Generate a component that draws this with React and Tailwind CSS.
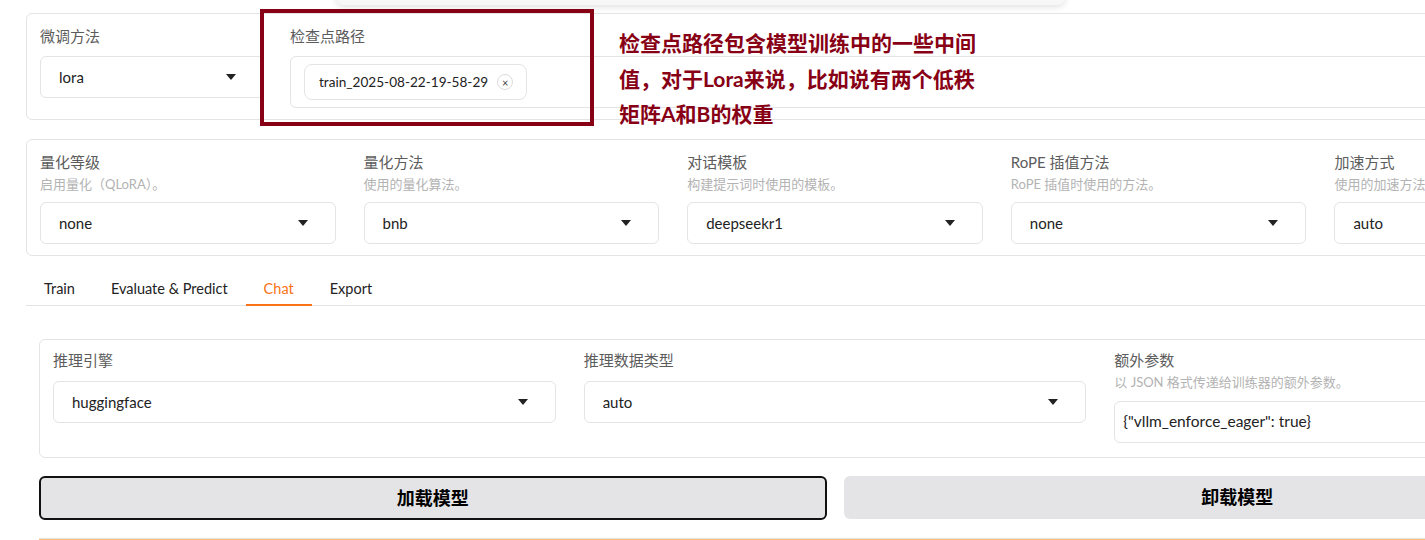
import React from 'react';

const FONT = "font-['Lato','Noto_Sans_CJK_SC',sans-serif]";

const Arrow = () => (
    <svg width="10" height="6" viewBox="0 0 10 6" className="shrink-0">
        <path d="M0 0 L10 0 L5 6 Z" fill="#222" />
    </svg>
);

const Select = ({ value, className = '' }) => (
    <div className={`h-[42px] border border-[#e4e4e4] rounded-md bg-white flex items-center justify-between pl-[18px] pr-[27px] ${className}`}>
        <span className="text-[15px] text-[#222]">{value}</span>
        <Arrow />
    </div>
);

const Label = ({ children }) => (
    <div className="text-[15px] leading-[20px] text-[#5c5c5c]">{children}</div>
);

const Info = ({ children }) => (
    <div className="text-[13px] leading-[20px] text-[#b3b3b3] mt-[2px] whitespace-nowrap">{children}</div>
);

const Field = ({ label, info, value }) => (
    <div className="flex flex-col">
        <Label>{label}</Label>
        <Info>{info}</Info>
        <Select value={value} className="mt-[8px]" />
    </div>
);

const tabs = ['Train', 'Evaluate & Predict', 'Chat', 'Export'];

export default function App() {
    return (
        <div className={`w-[1425px] h-[540px] overflow-hidden bg-white relative ${FONT}`}>
            {/* dropdown popup peeking from above */}
            <div className="absolute left-[336px] top-[-10px] w-[729px] h-[15px] bg-[#f7f7f7] rounded-b-lg shadow-[0_2px_6px_rgba(0,0,0,0.12)] z-10" />

            <div className="w-[1670px] px-[26px]">
                {/* row 1 */}
                <div className="mt-[13px] border border-[#e4e4e4] rounded-md pt-[12px] pb-[11px] px-[13px] flex gap-[26px]">
                    <div className="w-[224px] flex flex-col">
                        <Label>微调方法</Label>
                        <Select value="lora" className="mt-[10px] h-[41px]" />
                    </div>
                    <div className="flex-1 flex flex-col">
                        <Label>检查点路径</Label>
                        <div className="mt-[10px] h-[52px] border border-[#e4e4e4] rounded-md px-[13px] flex items-center">
                            <div className="h-[36px] border border-[#e4e4e4] rounded-lg pl-[14px] pr-[13px] flex items-center gap-[9px]">
                                <span className="text-[13.6px] text-[#222]">train_2025-08-22-19-58-29</span>
                                <span className="w-[16px] h-[16px] rounded-full border border-[#dcdcdc] flex items-center justify-center text-[11px] leading-none text-[#444]">×</span>
                            </div>
                        </div>
                    </div>
                </div>

                {/* row 2 */}
                <div className="mt-[19px] border border-[#e4e4e4] rounded-md pt-[12px] pb-[11px] px-[13px] grid grid-cols-5 gap-[28px]">
                    <Field label="量化等级" info="启用量化（QLoRA）。" value="none" />
                    <Field label="量化方法" info="使用的量化算法。" value="bnb" />
                    <Field label="对话模板" info="构建提示词时使用的模板。" value="deepseekr1" />
                    <Field label="RoPE 插值方法" info="RoPE 插值时使用的方法。" value="none" />
                    <Field label="加速方式" info="使用的加速方法。" value="auto" />
                </div>

                {/* tabs */}
                <div className="mt-[14px] flex border-b border-[#e4e4e4] h-[36px]">
                    {tabs.map(t => (
                        <div
                            key={t}
                            className={`px-[18px] pt-[3px] flex items-center text-[14.5px] ${t === 'Chat' ? 'text-[#f97316] border-b-2 border-[#f97316] -mb-px' : 'text-[#222]'}`}
                        >
                            {t}
                        </div>
                    ))}
                </div>

                <div className="px-[13px] pt-[33px]">
                    {/* chat panel */}
                    <div className="border border-[#e4e4e4] rounded-md pt-[10px] pb-[14px] px-[13px] grid grid-cols-3 gap-[28px]">
                        <div className="flex flex-col">
                            <Label>推理引擎</Label>
                            <Select value="huggingface" className="mt-[11px]" />
                        </div>
                        <div className="flex flex-col">
                            <Label>推理数据类型</Label>
                            <Select value="auto" className="mt-[11px]" />
                        </div>
                        <div className="flex flex-col">
                            <Label>额外参数</Label>
                            <Info>以 JSON 格式传递给训练器的额外参数。</Info>
                            <div className="mt-[9px] h-[42px] border border-[#e4e4e4] rounded-md flex items-center px-[8px]">
                                <span className="text-[15.5px] text-[#222]">{'{"vllm_enforce_eager": true}'}</span>
                            </div>
                        </div>
                    </div>

                    {/* buttons */}
                    <div className="mt-[18px] grid grid-cols-2 gap-[17px]">
                        <button className="h-[44px] bg-[#e4e4e7] border-2 border-[#111] rounded-md text-[18px] font-bold text-black">
                            加载模型
                        </button>
                        <button className="h-[43px] bg-[#e4e4e7] rounded-md text-[18px] font-bold text-black">
                            卸载模型
                        </button>
                    </div>

                    <div className="mt-[18px] border-t border-[#e4e4e4] h-[10px] bg-[#fdba74]" />
                </div>
            </div>

            {/* annotation overlay */}
            <div className="absolute left-[260px] top-[9px] w-[334px] h-[117px] border-4 border-[#880015] pointer-events-none" />
            <div className="absolute left-[619px] top-[25px] text-[21px] leading-[35.5px] font-bold text-[#880015] pointer-events-none">
                <div>检查点路径包含模型训练中的一些中间</div>
                <div>值，对于Lora来说，比如说有两个低秩</div>
                <div>矩阵A和B的权重</div>
            </div>
        </div>
    );
}
